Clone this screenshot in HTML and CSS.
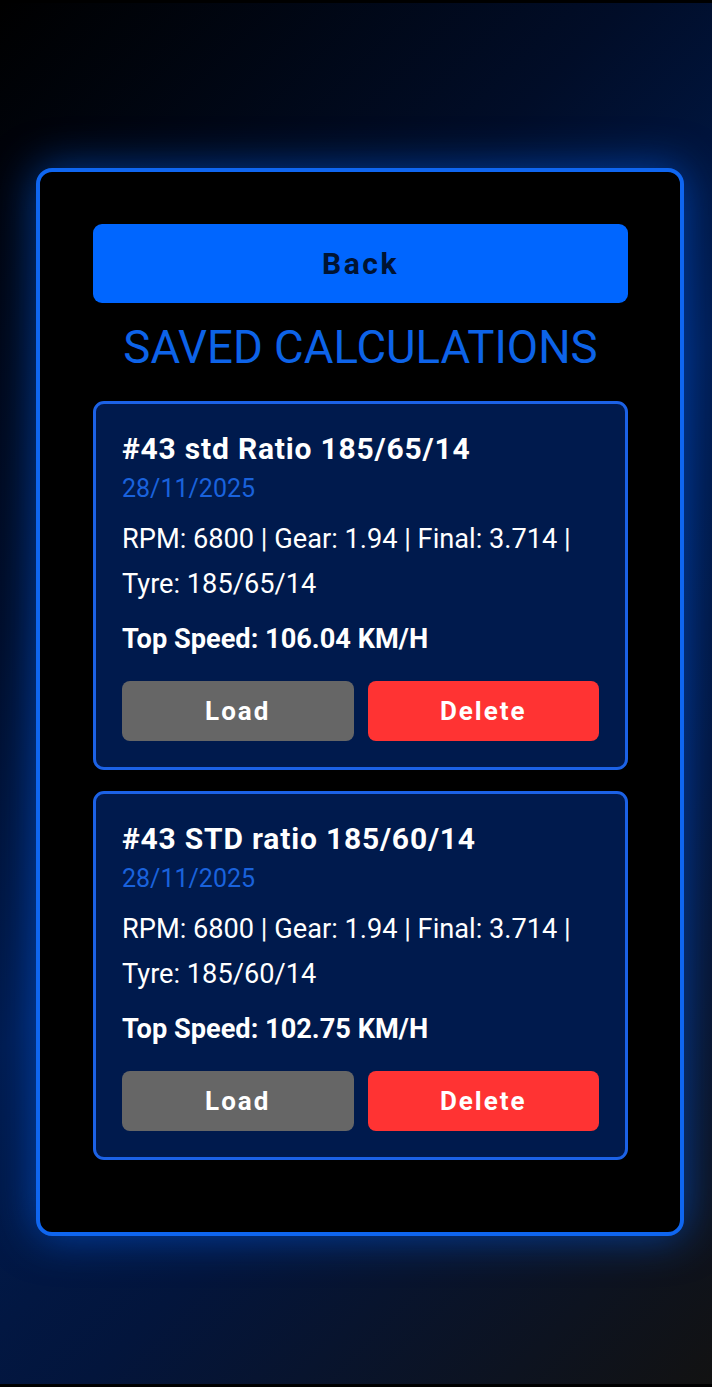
FILE: index.html
```html
<!DOCTYPE html>
<html lang="en">
<head>
<meta charset="utf-8">
<title>Saved Calculations</title>
<link rel="stylesheet" href="styles.css">
</head>
<body>
<main class="panel">
  <button class="back-btn">Back</button>
  <h2 class="title">SAVED CALCULATIONS</h2>
  <section class="card">
    <h3 class="card-title">#43 std Ratio 185/65/14</h3>
    <div class="card-date">28/11/2025</div>
    <p class="card-info">RPM: 6800 | Gear: 1.94 | Final: 3.714 | Tyre: 185/65/14</p>
    <p class="card-speed">Top Speed: 106.04 KM/H</p>
    <div class="card-actions">
      <button class="btn btn-load">Load</button>
      <button class="btn btn-delete">Delete</button>
    </div>
  </section>
  <section class="card">
    <h3 class="card-title">#43 STD ratio 185/60/14</h3>
    <div class="card-date">28/11/2025</div>
    <p class="card-info">RPM: 6800 | Gear: 1.94 | Final: 3.714 | Tyre: 185/60/14</p>
    <p class="card-speed">Top Speed: 102.75 KM/H</p>
    <div class="card-actions">
      <button class="btn btn-load">Load</button>
      <button class="btn btn-delete">Delete</button>
    </div>
  </section>
</main>
</body>
</html>
```

FILE: styles.css
```css
html {
  background: #000;
}
body {
  margin: 0;
  border-top: 3px solid #000;
  min-height: 1384px;
  box-sizing: border-box;
  padding: 165px 28px 0 36px;
  background: linear-gradient(135deg, #000000 0%, #010d28 30%, #001b4e 50%, #03153c 70%, #121212 100%);
  font-family: Roboto, "Liberation Sans", Arial, sans-serif;
  color: #fff;
}
.panel {
  width: 648px;
  box-sizing: border-box;
  border: 4px solid #0f66f0;
  border-radius: 16px;
  background: #000;
  padding: 52px 52px 72px 53px;
  box-shadow: 0 0 44px rgba(0, 102, 255, 0.55);
  display: flex;
  flex-direction: column;
}
.back-btn {
  height: 79px;
  border: none;
  border-radius: 9px;
  background: #0066ff;
  color: #001433;
  font-family: inherit;
  font-size: 30px;
  font-weight: 700;
  letter-spacing: 2.5px;
  padding: 0;
}
.title {
  margin: 19px 0 27px;
  text-align: center;
  font-size: 45.5px;
  line-height: 52px;
  font-weight: 400;
  color: #0d63e8;
}
.card {
  border: 3px solid #1c62e6;
  border-radius: 11px;
  background: #001a4d;
  padding: 28px 26px 26px;
}
.card + .card {
  margin-top: 21px;
}
.card-title {
  margin: 0;
  font-size: 30px;
  line-height: 34px;
  font-weight: 700;
  letter-spacing: 0.8px;
}
.card-date {
  margin-top: 8px;
  font-size: 25px;
  line-height: 29px;
  color: #1a62dc;
}
.card-info {
  margin: 14px 0 0;
  font-size: 27.2px;
  line-height: 45px;
}
.card-speed {
  margin: 17px 0 0;
  font-size: 27.2px;
  line-height: 31px;
  font-weight: 700;
}
.card-actions {
  margin-top: 26px;
  display: grid;
  grid-template-columns: 1fr 1fr;
  gap: 14px;
}
.btn {
  height: 60px;
  border: none;
  border-radius: 8px;
  color: #fff;
  font-family: inherit;
  font-size: 26px;
  font-weight: 700;
  letter-spacing: 2px;
  padding: 0;
}
.btn-load {
  background: #666666;
}
.btn-delete {
  background: #ff3333;
}
```
